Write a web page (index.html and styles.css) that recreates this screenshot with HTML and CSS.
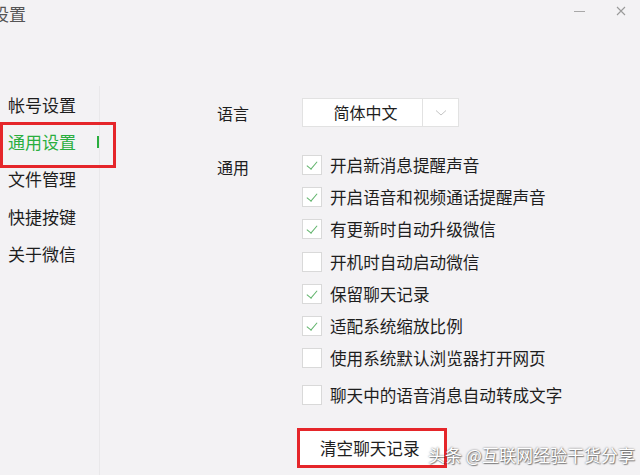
FILE: index.html
```html
<!DOCTYPE html>
<html>
<head>
    <meta charset="utf-8">
    <title>设置</title>
    <link rel="stylesheet" href="styles.css">
</head>
<body>
    <div class="window">
        <div class="titlebar">
            <span class="title">设置</span>
            <div class="controls">
                <span class="btn-min"></span>
                <svg class="btn-close" width="10" height="10" viewBox="0 0 10 10">
                    <path d="M1 1 L9 9 M9 1 L1 9" stroke="#9a9a9a" stroke-width="1.1" fill="none"/>
                </svg>
            </div>
        </div>

        <div class="body">
            <ul class="sidebar">
                <li>帐号设置</li>
                <li class="active">通用设置<span class="bar"></span></li>
                <li>文件管理</li>
                <li>快捷按键</li>
                <li>关于微信</li>
            </ul>

            <div class="main">
                <div class="row lang-row">
                    <div class="label">语言</div>
                    <div class="select">
                        <span class="select-text">简体中文</span>
                        <span class="select-arrow">
                            <svg width="12" height="8" viewBox="0 0 12 8">
                                <path d="M1 1.5 L6 6 L11 1.5" stroke="#c4c4c4" stroke-width="1" fill="none"/>
                            </svg>
                        </span>
                    </div>
                </div>

                <div class="row">
                    <div class="label general-label">通用</div>
                    <ul class="options">
                        <li><span class="box checked"></span>开启新消息提醒声音</li>
                        <li><span class="box checked"></span>开启语音和视频通话提醒声音</li>
                        <li><span class="box checked"></span>有更新时自动升级微信</li>
                        <li><span class="box"></span>开机时自动启动微信</li>
                        <li><span class="box checked"></span>保留聊天记录</li>
                        <li><span class="box checked"></span>适配系统缩放比例</li>
                        <li><span class="box"></span>使用系统默认浏览器打开网页</li>
                        <li class="last"><span class="box"></span>聊天中的语音消息自动转成文字</li>
                    </ul>
                </div>

                <div class="row">
                    <div class="label"></div>
                    <button class="clear-btn">清空聊天记录</button>
                </div>
            </div>
        </div>

        <div class="watermark">头条 @互联网经验干货分享</div>
    </div>
</body>
</html>
```

FILE: styles.css
```css
* {
    box-sizing: border-box;
}

body {
    margin: 0;
    background-color: #f3f2f4;
    font-family: "Noto Sans CJK SC", "Microsoft YaHei", sans-serif;
    color: #1e1e1e;
    overflow: hidden;
}

.window {
    position: relative;
    width: 640px;
    height: 475px;
    overflow: hidden;
}

/* title bar */
.titlebar {
    display: flex;
    justify-content: space-between;
    align-items: center;
    height: 28px;
}

.title {
    margin-left: -8px;
    font-size: 17px;
    color: #555;
    line-height: 28px;
}

.controls {
    display: flex;
    align-items: center;
    gap: 31px;
    margin-right: 14px;
    margin-top: -6px;
}

.btn-min {
    display: block;
    width: 11px;
    height: 1px;
    background: #a8a8a8;
}

.btn-close {
    display: block;
}

.body {
    display: flex;
    height: 447px;
}

/* left menu */
.sidebar {
    list-style: none;
    margin: 58px 0 0 0;
    padding: 0;
    width: 100px;
    border-right: 1px solid #e9e8ea;
}

.sidebar li {
    position: relative;
    height: 37.2px;
    line-height: 37.2px;
    padding-left: 8px;
    font-size: 17px;
    color: #1e1e1e;
}

.sidebar li.active {
    color: #2aae3e;
}

.sidebar li.active::after {
    content: "";
    position: absolute;
    left: 0;
    top: -1px;
    width: 110px;
    height: 40px;
    border: 3px solid #e5262a;
}

.sidebar .bar {
    position: absolute;
    left: 97px;
    top: 13px;
    width: 2px;
    height: 12px;
    background: #2aae3e;
}

/* right panel */
.main {
    padding: 70px 0 0 117px;
}

.row {
    display: flex;
}

.label {
    width: 85px;
    font-size: 16px;
    flex-shrink: 0;
}

.lang-row {
    align-items: center;
    height: 29px;
    margin-bottom: 22px;
}

.select {
    display: flex;
    width: 157px;
    height: 29px;
    background: #fff;
    border: 1px solid #e2e2e2;
}

.select-text {
    flex: 1;
    text-align: center;
    font-size: 16px;
    line-height: 27px;
    padding-left: 6px;
}

.select-arrow {
    display: flex;
    align-items: center;
    justify-content: center;
    width: 36px;
    border-left: 1px solid #e2e2e2;
}

.general-label {
    line-height: 32px;
    padding-top: 2px;
}

.options {
    list-style: none;
    margin: 0;
    padding: 0;
}

.options li {
    display: flex;
    align-items: center;
    height: 32.2px;
    font-size: 16.6px;
}

.options li.last {
    margin-top: 5px;
}

.box {
    position: relative;
    width: 20px;
    height: 20px;
    margin-right: 8px;
    background: #fff;
    border: 1px solid #d9d9d9;
}

.box.checked::after {
    content: "";
    position: absolute;
    left: 6px;
    top: 3px;
    width: 5px;
    height: 9px;
    border-right: 1px solid #5fb36a;
    border-bottom: 1px solid #5fb36a;
    transform: rotate(40deg);
}

.clear-btn {
    margin-top: 16px;
    margin-left: -5px;
    width: 150px;
    height: 40px;
    background: #fff;
    border: 3px solid #e5262a;
    font-family: inherit;
    font-size: 16.6px;
    color: #1e1e1e;
    text-align: left;
    padding: 0 0 0 20px;
}

.watermark {
    position: absolute;
    left: 428px;
    top: 442px;
    font-size: 17px;
    color: #fff;
    text-shadow: 0 0 2px rgba(0, 0, 0, 0.6), 1px 1px 1px rgba(0, 0, 0, 0.4);
}
```
